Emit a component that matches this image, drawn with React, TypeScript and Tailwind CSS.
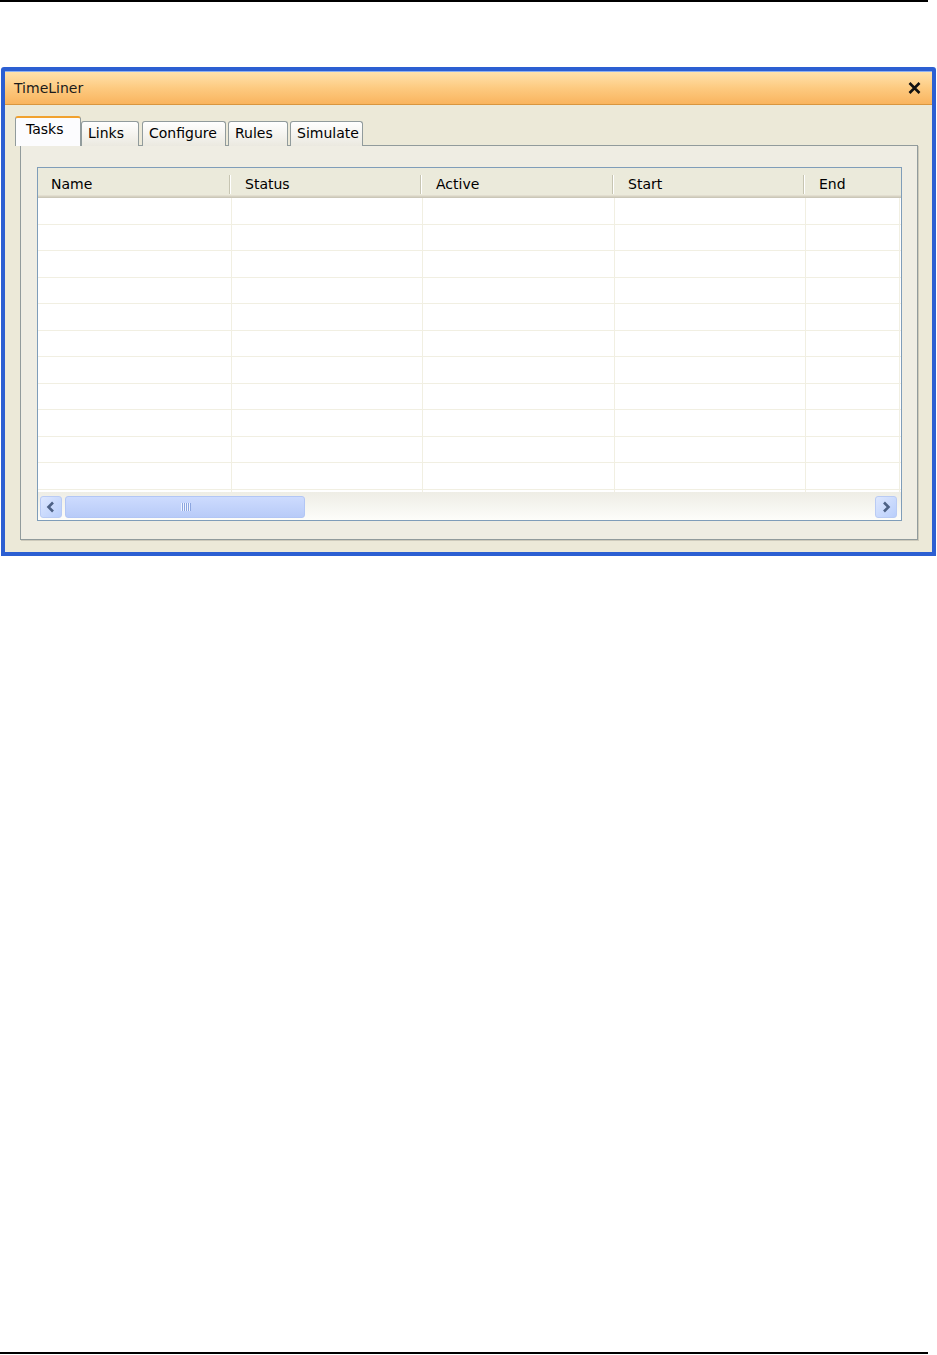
const font = { fontFamily: '"DejaVu Sans", Verdana, sans-serif' };

const columns = [
  { label: "Name", width: "w-[194px]" },
  { label: "Status", width: "w-[191px]" },
  { label: "Active", width: "w-[192px]" },
  { label: "Start", width: "w-[191px]" },
  { label: "End", width: "w-[94px]" },
];

const rows = Array.from({ length: 11 }, (_, i) => i);

const tabs = [
  { label: "Tasks", width: "w-[66px]", active: true, gap: "" },
  { label: "Links", width: "w-[58px]", active: false, gap: "" },
  { label: "Configure", width: "w-[84px]", active: false, gap: "ml-[3px]" },
  { label: "Rules", width: "w-[60px]", active: false, gap: "ml-[2px]" },
  { label: "Simulate", width: "w-[73px]", active: false, gap: "ml-[2px]" },
];

const ScrollButton = ({ dir }: { dir: "left" | "right" }) => (
  <div className="w-[22px] h-[22px] shrink-0 rounded-[3px] border border-[#b9cbf4] bg-gradient-to-br from-[#dde7fe] to-[#b9cefb] flex items-center justify-center">
    <svg width="10" height="12" viewBox="0 0 10 12">
      <path
        d={dir === "left" ? "M7 1.5 L2.5 6 L7 10.5" : "M3 1.5 L7.5 6 L3 10.5"}
        fill="none"
        stroke="#4d6185"
        strokeWidth="2.6"
      />
    </svg>
  </div>
);

const TimeLiner = () => {
  return (
    <div className="w-[937px] h-[1355px] bg-white flex flex-col" style={font}>
      <div className="h-[2px] w-[928px] bg-black" />

      <div className="mt-[65px] ml-[1px] w-[935px] border-[4px] border-[#2c5fd2] rounded-t-[3px] bg-[#ece9d8]">
        {/* title bar */}
        <div className="h-[34px] border-t border-[#8fb2f2] bg-gradient-to-b from-[#ffe2ac] via-[#fdca80] to-[#f9b45e] border-b border-b-[#d9963f] flex items-center justify-between pl-[9px] pr-[11px]">
          <span className="text-[14px] text-[#1b1b1b]">TimeLiner</span>
          <svg width="13" height="12" viewBox="0 0 13 12">
            <path d="M1.5 1 L11.5 11 M11.5 1 L1.5 11" stroke="#111" strokeWidth="2.6" />
          </svg>
        </div>

        <div className="pt-[11px] pl-[10px] pr-[14px] pb-[12px]">
          {/* tabs */}
          <div className="relative z-10 flex items-end h-[30px] -mb-[1px]">
            {tabs.map((t) =>
              t.active ? (
                <div
                  key={t.label}
                  className={`${t.width} h-[30px] rounded-t-[3px] border border-b-0 border-[#919b9c] border-t-2 border-t-[#f1a12e] bg-[#fcfcfe] pl-[10px] pt-[1px] text-[14px] text-black`}
                >
                  {t.label}
                </div>
              ) : (
                <div
                  key={t.label}
                  className={`${t.width} ${t.gap} h-[25px] rounded-t-[3px] border border-b-0 border-[#919b9c] bg-gradient-to-b from-white to-[#ebe9e0] pl-[6px] pt-[1px] text-[14px] text-black`}
                >
                  {t.label}
                </div>
              )
            )}
          </div>

          {/* tab panel */}
          <div className="ml-[5px] w-[898px] h-[395px] border border-[#919b9c] bg-[#efede3] shadow-[1px_1px_0_#cdcabb] pt-[21px] pl-[16px]">
            <div className="w-[865px] border border-[#7f9db9] bg-white flex flex-col">
              {/* header */}
              <div className="flex flex-col">
                <div className="flex h-[27px] bg-[#ebeadb] overflow-hidden">
                  {columns.map((c, i) => (
                    <div key={c.label} className={`${c.width} shrink-0 flex`}>
                      <span className="flex-1 pl-[13px] pt-[6px] text-[14px] text-black">{c.label}</span>
                      {i < 4 && (
                        <div className="mr-[1px] mt-[7px] h-[19px] w-[2px] border-l border-[#c7c5b2] bg-white" />
                      )}
                    </div>
                  ))}
                </div>
                <div className="h-px bg-[#e2ded0]" />
                <div className="h-px bg-[#d6d2c2]" />
                <div className="h-px bg-[#cbc7b8]" />
              </div>

              {/* rows */}
              <div className="flex flex-col h-[294px] overflow-hidden">
                {rows.map((r) => (
                  <div key={r} className="flex h-[26.5px] shrink-0 border-b border-[#f1efe2]">
                    {columns.map((c) => (
                      <div key={c.label} className={`${c.width} shrink-0 border-r border-[#f1efe2]`} />
                    ))}
                  </div>
                ))}
                <div className="flex flex-1">
                  {columns.map((c) => (
                    <div key={c.label} className={`${c.width} shrink-0 border-r border-[#f1efe2]`} />
                  ))}
                </div>
              </div>

              {/* horizontal scrollbar */}
              <div className="h-[28px] flex items-start pt-[4px] pl-[2px] pr-[4px] bg-gradient-to-b from-[#eeede5] to-[#fdfdfa]">
                <ScrollButton dir="left" />
                <div className="ml-[3px] w-[240px] h-[22px] rounded-[3px] border border-[#b2c6f5] bg-gradient-to-b from-[#cddbfe] to-[#b8cbf8] flex items-center justify-center gap-[1px]">
                  {[0, 1, 2, 3, 4].map((g) => (
                    <div key={g} className="w-[1px] h-[8px] bg-[#eef3ff] shadow-[1px_0_0_#8ca6e0]" />
                  ))}
                </div>
                <div className="flex-1" />
                <ScrollButton dir="right" />
              </div>
            </div>
          </div>
        </div>
      </div>

      <div className="mt-auto mb-px h-[2px] w-[928px] bg-black" />
    </div>
  );
};

export default TimeLiner;
